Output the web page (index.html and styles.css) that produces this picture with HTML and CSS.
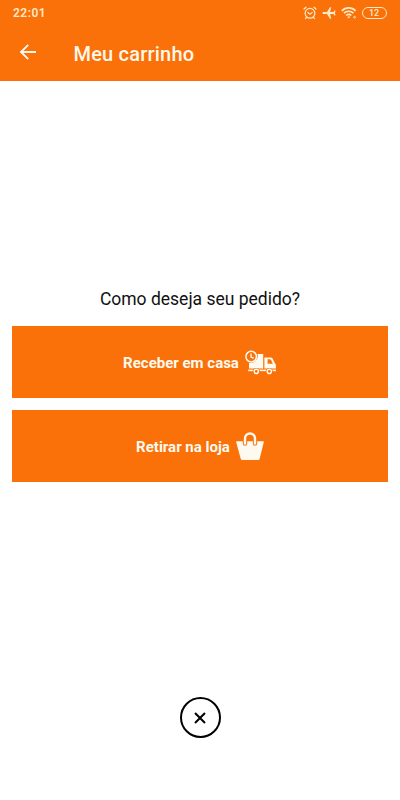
FILE: index.html
```html
<!DOCTYPE html>
<html lang="pt-BR">
<head>
    <meta charset="UTF-8">
    <meta name="viewport" content="width=device-width, initial-scale=1.0">
    <title>Meu carrinho</title>
    <link rel="stylesheet" href="styles.css">
</head>
<body>

<div class="screen">
    <header class="header">
        <!-- Status bar -->
        <div class="status-bar">
            <span class="time">22:01</span>
            <div class="status-icons">
                <svg class="alarm" width="14" height="14" viewBox="0 0 14 14" fill="none" stroke="currentColor" stroke-width="1.2" stroke-linecap="round">
                    <circle cx="7" cy="7.3" r="4.9"/>
                    <path d="M4.8 6.5L7 8.2L9.2 6.5M1 3L3 1.2M13 3L11 1.2M3.4 11.4L2.5 12.6M10.6 11.4L11.5 12.6"/>
                </svg>
                <svg class="plane" width="14" height="14" viewBox="0 0 14 14" fill="currentColor">
                    <path d="M.5 7c0-.6.5-1 1.1-1H5L8 1.2H9.2L8.1 6H11.3L12.6 4.4H13.5L13 7L13.5 9.6H12.6L11.3 8H8.1L9.2 12.8H8L5 8H1.6C1 8 .5 7.6 .5 7z"/>
                </svg>
                <svg class="wifi" width="16" height="14" viewBox="0 0 16 14" fill="none" stroke="currentColor" stroke-width="1.7">
                    <path d="M.8 4.8C4.7.9 10.8.9 14.7 4.8M3 7.2c2.7-2.6 6.8-2.6 9.5 0M5.2 9.5c1.5-1.4 3.6-1.4 5.1 0"/>
                    <path d="M6.3 10.8L7.8 12.6L9.3 10.8Q7.8 9.8 6.3 10.8z" fill="currentColor" stroke="none"/>
                    <circle cx="13.6" cy="11.2" r=".9" stroke-width="1"/>
                </svg>
                <span class="battery">12</span>
            </div>
        </div>

        <!-- App bar -->
        <div class="app-bar">
            <svg class="back" width="18" height="18" viewBox="0 0 18 18" fill="none" stroke="currentColor" stroke-width="1.9">
                <path d="M17 9H2.4M9.2 1.8L2 9L9.2 16.2"/>
            </svg>
            <h1>Meu carrinho</h1>
        </div>
    </header>

    <!-- Delivery options -->
    <main class="options">
        <p class="question">Como deseja seu pedido?</p>
        <button type="button" class="btn">
            <span>Receber em casa</span>
            <svg class="truck" width="32" height="26" viewBox="0 0 32 26" fill="none" stroke="currentColor">
                <path d="M12.6 4H18.2V18.6H4V12.9A7.4 7.4 0 0 0 12.6 4z" fill="currentColor" stroke="none"/>
                <path d="M19.4 7.4h6q1.5 0 2.3 1.4l2 4.1q1.2.7 1.2 2.3v3.4H19.4zM22.6 9.2v4.5h5.2l-1.7-3.6q-.4-.9-1.2-.9z" fill="currentColor" fill-rule="evenodd" stroke="none"/>
                <path d="M3.2 20.4H31" stroke-width="1.6"/>
                <circle cx="6.2" cy="6.6" r="5.3" stroke-width="1.5"/>
                <path d="M6 3.4V7L8.8 8.1" stroke-width="1.3"/>
                <circle class="wheel-gap" cx="11.3" cy="21.4" r="3.5"/>
                <circle class="wheel-gap" cx="24.3" cy="21.4" r="3.5"/>
                <circle cx="11.3" cy="21.4" r="2.1" stroke-width="1.4"/>
                <circle cx="24.3" cy="21.4" r="2.1" stroke-width="1.4"/>
            </svg>
        </button>
        <button type="button" class="btn">
            <span>Retirar na loja</span>
            <svg class="bag" width="28" height="30" viewBox="0 0 28 30">
                <path d="M.6 9.2H27.4q.6 0 .5.6L23.6 26.9q-.3 1.1-1.4 1.1H6.2q-1.1 0-1.4-1.1L.1 9.8q-.1-.6.5-.6z" fill="currentColor"/>
                <path class="handle-gap" d="M9 11.5V6.5a5 5 0 0 1 10 0V11.5" fill="none" stroke-width="4.4" stroke-linecap="round"/>
                <path d="M9 11.5V6.5a5 5 0 0 1 10 0V11.5" fill="none" stroke="currentColor" stroke-width="2.4" stroke-linecap="round"/>
            </svg>
        </button>
    </main>

    <!-- Close -->
    <footer class="footer">
        <button type="button" class="close" aria-label="Fechar">
            <svg width="12" height="12" viewBox="0 0 12 12" fill="none" stroke="currentColor" stroke-width="2">
                <path d="M1 1L11 11M11 1L1 11"/>
            </svg>
        </button>
    </footer>
</div>

</body>
</html>
```

FILE: styles.css
```css
/* General Page Styling */
body {
    margin: 0;
    background: #fff;
    font-family: Roboto, "Liberation Sans", sans-serif;
}

svg {
    display: block;
    flex-shrink: 0;
}

.screen {
    display: flex;
    flex-direction: column;
    height: 800px;
}

/* Header */
.header {
    height: 81px;
    background: #f97108;
    color: #fff8ea;
}

.status-bar {
    display: flex;
    justify-content: space-between;
    align-items: center;
    height: 25px;
    padding: 0 13px;
    color: #ffe9c8;
}

.time {
    font-size: 12px;
    font-weight: 600;
    letter-spacing: 0.5px;
}

.status-icons {
    display: flex;
    align-items: center;
    gap: 5px;
}

.battery {
    box-sizing: border-box;
    width: 25px;
    height: 12px;
    padding-right: 1px;
    border: 1px solid #ffe9c8;
    border-radius: 6px;
    font-size: 9px;
    font-weight: 500;
    line-height: 10px;
    text-align: center;
}

.app-bar {
    display: flex;
    align-items: center;
    height: 56px;
    padding: 0 19px 2px;
    box-sizing: border-box;
}

.app-bar h1 {
    margin: 4px 0 0 36.5px;
    font-size: 20px;
    font-weight: 500;
    letter-spacing: 0.2px;
}

/* Delivery options */
.options {
    display: flex;
    flex-direction: column;
    gap: 12px;
    padding: 207px 12px 0;
}

.question {
    margin: 0 0 4px;
    font-size: 17.5px;
    line-height: 22px;
    color: #111;
    text-align: center;
}

/* Buttons */
.btn {
    display: flex;
    justify-content: center;
    align-items: center;
    gap: 6px;
    height: 72px;
    padding: 1px 0 0;
    background: #f97108;
    border: none;
    color: #fffaf0;
    font-family: inherit;
    font-size: 15px;
    font-weight: 700;
    cursor: pointer;
}

.wheel-gap {
    fill: #f97108;
    stroke: none;
}

.handle-gap {
    stroke: #f97108;
}

/* Close button */
.footer {
    display: flex;
    justify-content: center;
    margin-top: auto;
    padding-bottom: 62px;
}

.close {
    display: flex;
    justify-content: center;
    align-items: center;
    width: 41px;
    height: 41px;
    padding: 0;
    background: #fff;
    border: 2px solid #000;
    border-radius: 50%;
    color: #000;
    cursor: pointer;
}
```
